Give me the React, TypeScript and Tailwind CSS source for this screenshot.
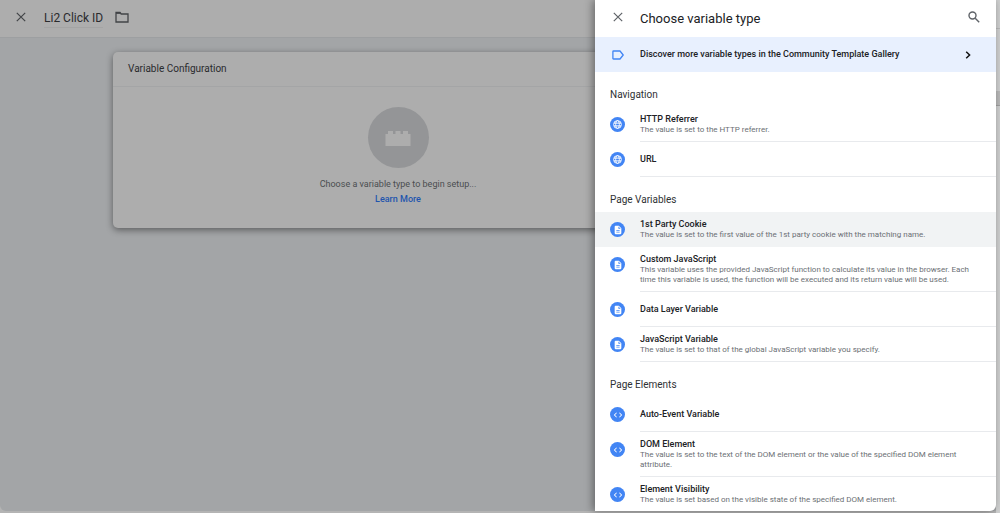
import type { ReactNode } from "react";

type VariableType = {
  name: string;
  description?: string;
  active?: boolean;
};

type Section = {
  title: string;
  icon: ReactNode;
  items: VariableType[];
};

const GlobeIcon = () => (
  <svg viewBox="0 0 24 24" className="h-[11px] w-[11px]" fill="none" stroke="white" strokeWidth="2" aria-hidden="true">
    <circle cx="12" cy="12" r="8.5" />
    <ellipse cx="12" cy="12" rx="4" ry="8.5" />
    <path d="M4 9h16M4 15h16" />
  </svg>
);

const FileIcon = () => (
  <svg viewBox="0 0 24 24" className="h-[10px] w-[10px]" fill="white" aria-hidden="true">
    <path d="M14 2H6c-1.1 0-2 .9-2 2v16c0 1.1.9 2 2 2h12c1.1 0 2-.9 2-2V8l-6-6zm2 16H8v-2h8v2zm0-4H8v-2h8v2zm-3-5V3.5L18.5 9H13z" />
  </svg>
);

const CodeIcon = () => (
  <svg viewBox="0 0 24 24" className="h-[10px] w-[10px]" fill="white" aria-hidden="true">
    <path d="M9.4 16.6L4.8 12l4.6-4.6L8 6l-6 6 6 6 1.4-1.4zm5.2 0l4.6-4.6-4.6-4.6L16 6l6 6-6 6-1.4-1.4z" />
  </svg>
);

const CloseIcon = () => (
  <svg viewBox="0 0 10 10" className="h-[10px] w-[10px]" stroke="currentColor" strokeWidth="1.2" aria-hidden="true">
    <path d="M.8.8l8.400 8.400M9.200.8L.8 9.200" />
  </svg>
);

const sections: Section[] = [
  {
    title: "Navigation",
    icon: <GlobeIcon />,
    items: [
      { name: "HTTP Referrer", description: "The value is set to the HTTP referrer." },
      { name: "URL" },
    ],
  },
  {
    title: "Page Variables",
    icon: <FileIcon />,
    items: [
      {
        name: "1st Party Cookie",
        description: "The value is set to the first value of the 1st party cookie with the matching name.",
        active: true,
      },
      {
        name: "Custom JavaScript",
        description:
          "This variable uses the provided JavaScript function to calculate its value in the browser. Each time this variable is used, the function will be executed and its return value will be used.",
      },
      { name: "Data Layer Variable" },
      {
        name: "JavaScript Variable",
        description: "The value is set to that of the global JavaScript variable you specify.",
      },
    ],
  },
  {
    title: "Page Elements",
    icon: <CodeIcon />,
    items: [
      { name: "Auto-Event Variable" },
      {
        name: "DOM Element",
        description: "The value is set to the text of the DOM element or the value of the specified DOM element attribute.",
      },
      {
        name: "Element Visibility",
        description: "The value is set based on the visible state of the specified DOM element.",
      },
    ],
  },
];

const VariableRow = ({ item, icon }: { item: VariableType; icon: ReactNode }) => (
  <li>
    <button
      type="button"
      className={`flex w-full items-start gap-[15px] pl-[15px] text-left ${item.active ? "bg-[#f1f3f4]" : ""}`}
    >
      <span className="mt-[10px] flex h-[15px] w-[15px] shrink-0 items-center justify-center rounded-full bg-[#4285f4]">
        {icon}
      </span>
      <span
        className={`flex min-h-[35px] flex-1 flex-col justify-center border-b py-[6px] pr-6 ${
          item.active ? "border-[#f1f3f4]" : "border-[#e8eaed]"
        }`}
      >
        <span className="text-[9px] leading-[12px] font-medium text-[#202124]">{item.name}</span>
        {item.description && (
          <span className="text-[8px] leading-[10px] text-[#6b6f74]">{item.description}</span>
        )}
      </span>
    </button>
  </li>
);

const VariableEditor = () => (
  <div className="flex flex-1 flex-col rounded-b-[6px] bg-[#a3a5a7]">
    <header className="flex h-[38px] items-center border-b border-[#9d9fa1] bg-[#adadad] pb-[3px] pl-4 text-[#424447]">
      <button type="button" aria-label="Close editor">
        <CloseIcon />
      </button>
      <h1 className="ml-[18px] border-b border-[#a4a4a4] pt-[3px] text-[12px] leading-[18px] text-[#2a2b2d]">
        Li2 Click ID
      </h1>
      <button type="button" aria-label="Choose folder" className="ml-3">
        <svg viewBox="0 0 14 12" className="h-3 w-[14px]" fill="none" stroke="currentColor" strokeWidth="1.3" aria-hidden="true">
          <path d="M1 1.500h4l1.200 1.500H13v8H1z" />
          <path d="M1 2.200h4.500" />
        </svg>
      </button>
    </header>
    <main className="pt-[14px] pl-[113px]">
      <section className="w-[570px] rounded-[5px] bg-[#adadad] shadow-[0_2px_7px_rgba(0,0,0,0.45)]">
        <h2 className="border-b border-[#a4a5a6] px-[15px] text-[10px] leading-[34px] text-[#2a2b2d]">
          Variable Configuration
        </h2>
        <div className="flex flex-col items-center pt-5 pb-[21px] text-[9px] leading-[15px]">
          <div className="mb-[9px] flex h-[61px] w-[61px] items-center justify-center rounded-full bg-[#949597]">
            <svg viewBox="0 0 26 16" className="h-4 w-[26px]" fill="#adadad" aria-hidden="true">
              <path d="M.5 4H3V1h5v3h2.500V1h5v3H18V1h5v3h2.500v12H.5z" />
            </svg>
          </div>
          <p className="text-[#4b4d50]">Choose a variable type to begin setup...</p>
          <a href="#learn-more" className="font-medium text-[#1f55ad]">
            Learn More
          </a>
        </div>
      </section>
    </main>
  </div>
);

const VariableTypeDrawer = () => (
  <aside className="absolute top-0 right-1 bottom-[2px] w-[401px] overflow-hidden rounded-br-[6px] bg-white shadow-[-2px_0_9px_rgba(0,0,0,0.4)]">
    <header className="flex h-[37px] items-center pr-4 pb-[3px] pl-[18px] text-[#5f6368]">
      <button type="button" aria-label="Close">
        <CloseIcon />
      </button>
      <h2 className="ml-[17px] flex-1 pt-[3px] text-[13px] leading-[20px] text-[#202124]">Choose variable type</h2>
      <button type="button" aria-label="Search">
        <svg viewBox="0 0 12 12" className="h-3 w-3" fill="none" stroke="currentColor" strokeWidth="1.4" aria-hidden="true">
          <circle cx="4.5" cy="4.5" r="3.5" />
          <path d="M7.2 7.2l4 4" />
        </svg>
      </button>
    </header>
    <a
      href="#gallery"
      className="flex h-[35px] items-center bg-[#e8f0fe] pr-6 pl-[17px] text-[9px] font-medium text-[#202124]"
    >
      <svg viewBox="0 0 12 10" className="h-[10px] w-3" fill="none" stroke="#4285f4" strokeWidth="1.3" strokeLinejoin="round" aria-hidden="true">
        <path d="M1.500 1h6.500l3.200 4-3.200 4H1.500a.6.6 0 0 1-.6-.6V1.600a.6.6 0 0 1 .6-.6z" />
      </svg>
      <span className="ml-4 flex-1">Discover more variable types in the Community Template Gallery</span>
      <svg viewBox="0 0 8 8" className="h-2 w-2" fill="none" stroke="#111" strokeWidth="1.5" aria-hidden="true">
        <path d="M2.2.8L5.600 4 2.200 7.200" />
      </svg>
    </a>
    {sections.map((section) => (
      <section key={section.title}>
        <h3 className="px-[15px] pt-[14px] pb-[3px] text-[10px] leading-[18px] text-[#2f3134]">{section.title}</h3>
        <ul>
          {section.items.map((item) => (
            <VariableRow key={item.name} item={item} icon={section.icon} />
          ))}
        </ul>
      </section>
    ))}
  </aside>
);

export default function App() {
  return (
    <div className="relative flex h-screen flex-col overflow-hidden bg-[#b4b4b4] pb-[2px] font-['Roboto','Liberation_Sans',sans-serif]">
      <VariableEditor />
      {/* sliver of the page that stays visible beside the drawer */}
      <div className="absolute inset-y-0 right-0 w-1 bg-[#cfd0d0] pt-[28px]">
        <div className="h-[63px] border-t border-[#b9b9b9]" />
        <div className="h-[15px] border-b border-[#a0a0a0] bg-[#b9b9b9]" />
      </div>
      <VariableTypeDrawer />
    </div>
  );
}
